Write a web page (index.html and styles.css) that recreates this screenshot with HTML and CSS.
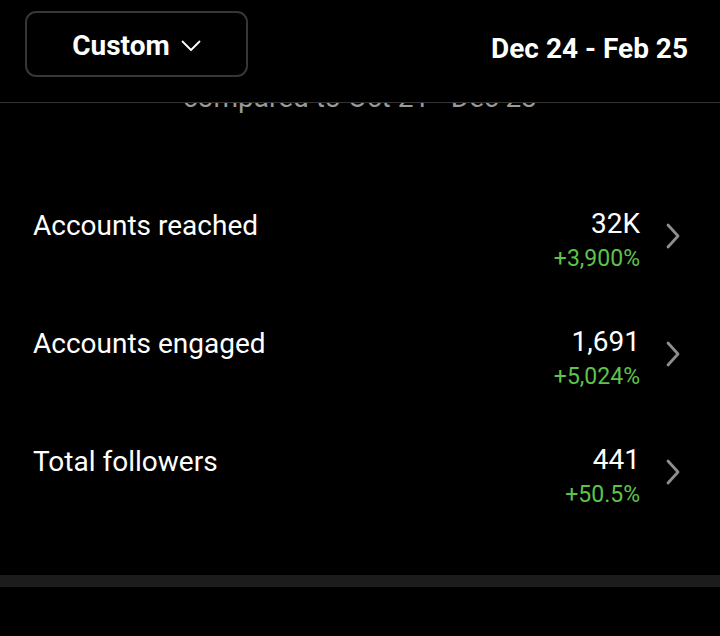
FILE: index.html
```html
<!DOCTYPE html>
<html lang="en">
<head>
<meta charset="utf-8">
<link rel="stylesheet" href="styles.css">
</head>
<body>
<header class="topbar">
  <button class="range-btn">
    <span>Custom</span>
    <svg class="caret" width="20" height="12" viewBox="0 0 20 12"><path d="M1.5 1.5 L10 10 L18.5 1.5" fill="none" stroke="#fff" stroke-width="1.8" stroke-linecap="round" stroke-linejoin="round"/></svg>
  </button>
  <div class="range-date">Dec 24 - Feb 25</div>
</header>
<main class="content">
  <div class="compare-clip"><div class="compare">compared to Oct 21 - Dec 23</div></div>
  <ul class="stats">
    <li class="stat">
      <span class="stat-label">Accounts reached</span>
      <div class="stat-values"><span class="stat-value">32K</span><span class="stat-delta">+3,900%</span></div>
      <svg class="chev" width="18" height="28" viewBox="0 0 18 28"><path d="M4 3 L14 14 L4 25" fill="none" stroke="#8e8e8e" stroke-width="2.8" stroke-linecap="round" stroke-linejoin="round"/></svg>
    </li>
    <li class="stat">
      <span class="stat-label">Accounts engaged</span>
      <div class="stat-values"><span class="stat-value">1,691</span><span class="stat-delta">+5,024%</span></div>
      <svg class="chev" width="18" height="28" viewBox="0 0 18 28"><path d="M4 3 L14 14 L4 25" fill="none" stroke="#8e8e8e" stroke-width="2.8" stroke-linecap="round" stroke-linejoin="round"/></svg>
    </li>
    <li class="stat">
      <span class="stat-label">Total followers</span>
      <div class="stat-values"><span class="stat-value">441</span><span class="stat-delta">+50.5%</span></div>
      <svg class="chev" width="18" height="28" viewBox="0 0 18 28"><path d="M4 3 L14 14 L4 25" fill="none" stroke="#8e8e8e" stroke-width="2.8" stroke-linecap="round" stroke-linejoin="round"/></svg>
    </li>
  </ul>
  <div class="band"></div>
</main>
</body>
</html>
```
FILE: styles.css
```css
html, body {
  margin: 0;
  padding: 0;
  background: #000;
  color: #fff;
  font-family: Roboto, "Noto Sans", sans-serif;
  width: 720px;
  height: 636px;
  overflow: hidden;
}

.topbar {
  box-sizing: border-box;
  height: 103px;
  border-bottom: 1px solid #333;
  display: flex;
  align-items: flex-start;
  justify-content: space-between;
  padding: 11px 32px 0 25px;
}

.range-btn {
  width: 223px;
  height: 66px;
  box-sizing: border-box;
  background: #000;
  border: 2px solid #363636;
  border-radius: 11px;
  color: #fff;
  font-family: inherit;
  font-size: 28px;
  font-weight: 700;
  display: flex;
  align-items: center;
  justify-content: center;
  gap: 11px;
  padding: 2px 0 0 0;
}

.caret {
  display: block;
  margin-top: 2px;
}

.range-date {
  font-size: 28px;
  font-weight: 700;
  line-height: 34px;
  margin-top: 21px;
}

.compare-clip {
  height: 12px;
  overflow: hidden;
}

.compare {
  margin-top: -20px;
  font-size: 28px;
  line-height: 30px;
  color: #9a9a9a;
  text-align: center;
}

.stats {
  list-style: none;
  margin: 0;
  padding: 94px 0 0 0;
}

.stat {
  height: 118px;
  display: flex;
  align-items: flex-start;
  padding: 0 38px 0 33px;
}

.stat-label {
  font-size: 28px;
  line-height: 34px;
  flex: 1;
}

.stat-values {
  display: flex;
  flex-direction: column;
  align-items: flex-end;
  margin-top: -2px;
}

.stat-value {
  font-size: 28px;
  line-height: 34px;
}

.stat-delta {
  font-size: 23px;
  line-height: 35px;
  color: #5fc24a;
}

.chev {
  display: block;
  margin: 13px 0 0 24px;
}

.band {
  margin-top: 12px;
  height: 12px;
  background: #1c1c1c;
}
```
